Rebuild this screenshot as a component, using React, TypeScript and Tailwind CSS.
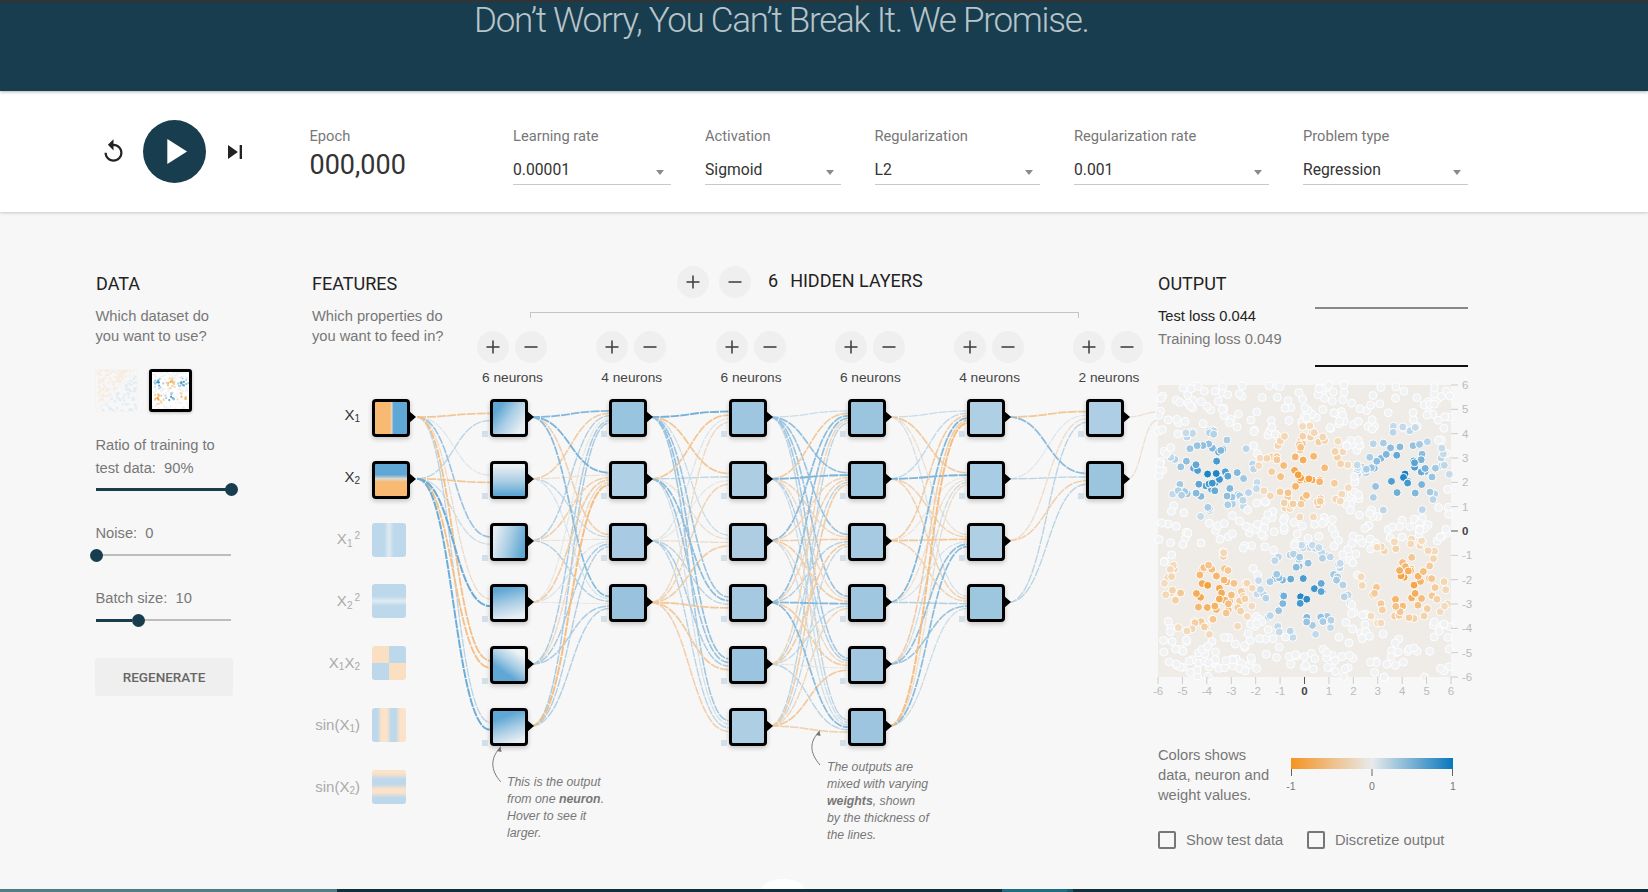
import { MdPlayArrow, MdReplay, MdSkipNext } from "react-icons/md";

// deterministic random so the scatter stays the same between renders
function seeded(seed: number) {
  return () => {
    seed = (seed + 0x6d2b79f5) | 0;
    let t = Math.imul(seed ^ (seed >>> 15), 1 | seed);
    t = (t + Math.imul(t ^ (t >>> 7), 61 | t)) ^ t;
    return ((t ^ (t >>> 14)) >>> 0) / 4294967296;
  };
}

function mix(a: number[], b: number[], t: number) {
  const c = a.map((v, i) => Math.round(v + (b[i] - v) * t));
  return `rgb(${c[0]},${c[1]},${c[2]})`;
}

const clusters = [
  { x: -3.8, y: 2.4, s: 1 },
  { x: 0, y: 2.4, s: -1 },
  { x: 4, y: 2.4, s: 1 },
  { x: -3.9, y: -2.5, s: -1 },
  { x: 0, y: -2.5, s: 1 },
  { x: 4.1, y: -2.2, s: -1 },
];

type Dot = { x: number; y: number; fill: string };

function makeDots(count: number, seed: number): Dot[] {
  const rnd = seeded(seed);
  const dots: Dot[] = [];
  for (let i = 0; i < count; i++) {
    const x = rnd() * 12 - 6;
    const y = rnd() * 12 - 6;
    let fill = "rgb(240,242,244)";
    for (const c of clusters) {
      const d = Math.hypot(x - c.x, y - c.y);
      if (d < 1.95) {
        const t = 0.08 + 0.92 * Math.pow(1 - d / 1.95, 1.4);
        fill =
          c.s > 0
            ? mix([214, 228, 238], [8, 119, 189], t)
            : mix([243, 226, 205], [245, 147, 34], t);
      }
    }
    dots.push({ x, y, fill });
  }
  return dots;
}

const dots = makeDots(820, 42);
const thumbDots = makeDots(170, 7);

const colX = [490, 609.3, 728.6, 847.9, 967.2, 1086.5];
const rowY = (i: number) => 399 + 61.8 * i;

// weights between layers, [source][target], negative is orange
const weights: number[][][] = [
  [
    [-0.6, 0.08, 0.5, -0.25, -0.7, 0.3],
    [0.3, -0.6, 0.2, 0.85, -0.7, 0.8],
  ],
  [
    [0.65, 0.7, -0.45, 0.6],
    [-0.5, -0.2, 0.25, 0.12],
    [0.35, -0.45, -0.15, 0.35],
    [-0.1, -0.5, 0.1, -0.06],
    [0.4, -0.3, 0.4, 0.4],
    [0.4, -0.8, 0.35, 0.35],
  ],
  [
    [0.75, -0.6, 0.2, 0.5, 0.55, 0.45],
    [-0.6, 0.3, -0.2, 0.6, 0.5, 0.15],
    [0.1, -0.1, -0.25, 0.3, 0.4, 0.3],
    [-0.3, -0.4, -0.5, -0.6, -0.55, -0.45],
  ],
  [
    [0.2, 0.55, 0.5, 0.5, 0.45, 0.3],
    [-0.55, 0.7, -0.4, -0.3, 0.35, 0.2],
    [0.6, -0.4, -0.5, -0.5, -0.3, 0.2],
    [0.55, -0.4, 0.35, 0.65, -0.5, 0.6],
    [-0.35, 0.3, -0.5, 0.25, -0.1, 0.3],
    [0.3, -0.5, 0.25, -0.35, -0.55, -0.45],
  ],
  [
    [0.2, -0.55, -0.2, 0.15],
    [0.25, 0.7, -0.4, -0.4],
    [-0.5, -0.1, -0.6, -0.4],
    [0.65, -0.2, 0.12, 0.35],
    [-0.5, 0.2, 0.55, 0.5],
    [-0.8, -0.25, 0.6, 0.2],
  ],
  [
    [-0.6, 0.6],
    [0.08, 0.3],
    [-0.25, -0.45],
    [0.3, 0.3],
  ],
];

function Links() {
  const paths: { d: string; w: number }[] = [];
  weights.forEach((layer, k) => {
    const sx = k === 0 ? 417 : colX[k - 1] + 41;
    const tx = colX[k];
    layer.forEach((row, i) => {
      const sy = rowY(i) + 18;
      row.forEach((w, j) => {
        const ty = rowY(j) + 18 + (i - (layer.length - 1) / 2) * (14.5 / layer.length);
        const mx = (sx + tx) / 2;
        paths.push({ d: `M${sx},${sy} C${mx},${sy} ${mx},${ty} ${tx},${ty}`, w });
      });
    });
  });
  // the last layer runs faintly into the output
  paths.push({ d: "M1127,417 C1142,417 1142,413 1158,412", w: -0.18 });
  paths.push({ d: "M1127,479 C1142,479 1142,420 1158,420", w: -0.18 });
  const sorted = paths.slice().sort((a, b) => Math.abs(a.w) - Math.abs(b.w));
  return (
    <svg
      width={846}
      height={620}
      viewBox="312 266 846 620"
      className="absolute top-0 left-0 z-0 overflow-visible"
      fill="none"
    >
      {sorted.map((p, i) => (
        <path
          key={i}
          d={p.d}
          strokeWidth={1 + 1.2 * Math.abs(p.w)}
          strokeDasharray="9 1"
          stroke={
            p.w > 0
              ? mix([232, 234, 235], [108, 172, 215], Math.min(1, Math.abs(p.w) * 1.25))
              : mix([232, 234, 235], [245, 190, 130], Math.min(1, Math.abs(p.w) * 1.35))
          }
        />
      ))}
      <path d="M500.7,781.7 C490,770 491,758 499,749" stroke="#777" strokeWidth="1" />
      <path d="M497,751 L500.5,746 L501.5,752 Z" fill="#777" />
      <path d="M820,765 C809,752 810,742 818,733" stroke="#777" strokeWidth="1" />
      <path d="M816,735 L819.5,730 L820.5,736 Z" fill="#777" />
    </svg>
  );
}

function Slider({ fill, thumb }: { fill: string; thumb: string }) {
  return (
    <div className="relative h-[14px] w-[135px] ml-[1px]">
      <div className="absolute left-0 right-0 top-[6px] h-[2px] bg-[#bdbdbd]" />
      <div className={`absolute left-0 top-[5.5px] h-[3px] bg-[#183d4e] ${fill}`} />
      <div className={`absolute top-[0.5px] h-[13px] w-[13px] rounded-full bg-[#183d4e] ${thumb}`} />
    </div>
  );
}

function Select({ label, value, width }: { label: string; value: string; width: string }) {
  return (
    <div className={`flex flex-col ${width}`}>
      <div className="text-[14.7px] leading-[20px] text-[#777] [font-family:Roboto,sans-serif]">{label}</div>
      <div className="mt-[10px] flex h-[29px] items-center justify-between border-b border-[#c9c9c9] pr-[7px]">
        <span className="text-[15.7px] text-[#333] [font-family:Roboto,sans-serif]">{value}</span>
        <span className="mt-[4px] h-0 w-0 border-x-[4px] border-t-[5px] border-x-transparent border-t-[#8a8a8a]" />
      </div>
    </div>
  );
}

function RoundButton({ sign }: { sign: string }) {
  return (
    <button className="flex h-[32px] w-[32px] items-center justify-center rounded-full bg-[#efefef]">
      <svg width="16" height="16" viewBox="0 0 16 16" stroke="#444" strokeWidth="1.6">
        <path d="M1.5 8 H14.5" />
        {sign === "+" && <path d="M8 1.5 V14.5" />}
      </svg>
    </button>
  );
}

function Node({ bg }: { bg: string }) {
  return (
    <div className="relative h-[38px] w-[38px]">
      <div className="absolute left-[-8px] top-[32px] h-[6px] w-[6px] bg-[#d2dfe9]" />
      <div className={`h-[38px] w-[38px] rounded-[4px] border-[3px] border-black shadow-[0_2px_5px_rgba(0,0,0,0.22)] ${bg}`} />
      <div className="absolute left-[37px] top-[12px] h-0 w-0 border-y-[6px] border-l-[7px] border-y-transparent border-l-black" />
    </div>
  );
}

const hidden = [
  {
    label: "6 neurons",
    nodes: [
      "bg-[linear-gradient(125deg,#5fa7d5_18%,#a8cde5_48%,#e6eef3_85%)]",
      "bg-[linear-gradient(180deg,#eaeff3_5%,#a9cde4_55%,#5fa7d5_95%)]",
      "bg-[linear-gradient(105deg,#e4ecf2_10%,#a9cde4_50%,#5fa7d5_90%)]",
      "bg-[linear-gradient(165deg,#5fa7d5_12%,#a9cde4_50%,#e8eff3_90%)]",
      "bg-[linear-gradient(35deg,#5fa7d5_30%,#a9cde4_55%,#eef3f6_85%)]",
      "bg-[linear-gradient(160deg,#5fa7d5_22%,#a9cde4_55%,#e8eff3_90%)]",
    ],
  },
  { label: "4 neurons", nodes: ["bg-[#98c4df]", "bg-[#b0d0e6]", "bg-[#a8cae2]", "bg-[#98c2de]"] },
  {
    label: "6 neurons",
    nodes: ["bg-[#9ec6e0]", "bg-[#adcde3]", "bg-[#aecde3]", "bg-[#a4c9e1]", "bg-[#9ac4df]", "bg-[#aecee4]"],
  },
  {
    label: "6 neurons",
    nodes: ["bg-[#9bc5df]", "bg-[#9cc6e0]", "bg-[#a6cae2]", "bg-[#9fc7e0]", "bg-[#a3c8e1]", "bg-[#9dc5df]"],
  },
  { label: "4 neurons", nodes: ["bg-[#aecfe4]", "bg-[#a8cce3]", "bg-[#aecfe4]", "bg-[#9dc6df]"] },
  { label: "2 neurons", nodes: ["bg-[#adcee4]", "bg-[#9bc5df]"] },
];

const features = [
  {
    label: (
      <>
        X<sub className="text-[10px]">1</sub>
      </>
    ),
    bg: "bg-[linear-gradient(90deg,#f8b973_47%,#e6d6c2_52%,#5fa7d5_58%)]",
    active: true,
  },
  {
    label: (
      <>
        X<sub className="text-[10px]">2</sub>
      </>
    ),
    bg: "bg-[linear-gradient(180deg,#5fa7d5_34%,#dfd9ce_46%,#f8b973_56%)]",
    active: true,
  },
  {
    label: (
      <>
        X<sub className="text-[10px]">1</sub>
        <sup className="ml-[2px] text-[10px]">2</sup>
      </>
    ),
    bg: "bg-[linear-gradient(90deg,#bdd8eb_36%,#e0ebf2_50%,#bdd8eb_64%)]",
  },
  {
    label: (
      <>
        X<sub className="text-[10px]">2</sub>
        <sup className="ml-[2px] text-[10px]">2</sup>
      </>
    ),
    bg: "bg-[linear-gradient(180deg,#bdd8eb_36%,#e0ebf2_50%,#bdd8eb_64%)]",
  },
  {
    label: (
      <>
        X<sub className="text-[10px]">1</sub>X<sub className="text-[10px]">2</sub>
      </>
    ),
    bg: "bg-[conic-gradient(#bdd8eb_0_25%,#fbdfc3_25%_50%,#bdd8eb_50%_75%,#fbdfc3_75%)]",
  },
  {
    label: (
      <>
        sin(X<sub className="text-[10px]">1</sub>)
      </>
    ),
    bg: "bg-[linear-gradient(90deg,#bdd8eb_16%,#fbe2c8_28%_44%,#bdd8eb_56%_70%,#fbe2c8_82%)]",
  },
  {
    label: (
      <>
        sin(X<sub className="text-[10px]">2</sub>)
      </>
    ),
    bg: "bg-[linear-gradient(180deg,#fbe2c8_10%,#bdd8eb_28%_42%,#fbe2c8_56%_66%,#bdd8eb_82%)]",
  },
];

function Thumb({ selected }: { selected?: boolean }) {
  return (
    <div
      className={
        selected
          ? "h-[43px] w-[43px] rounded-[3px] border-[3px] border-black bg-white shadow-[0_1px_3px_rgba(0,0,0,0.25)] overflow-hidden"
          : "h-[43px] w-[43px] rounded-[3px] border-[1px] border-[#eeeeee] opacity-35 overflow-hidden"
      }
    >
      <svg width="100%" height="100%" viewBox="-6 -6 12 12">
        {thumbDots.map((d, i) =>
          selected ? (
            <circle key={i} cx={d.x} cy={-d.y} r="0.36" fill={d.fill} />
          ) : (
            <circle
              key={i}
              cx={d.x}
              cy={-d.y}
              r="0.36"
              fill={d.x - d.y > 1 ? "#bcd9ec" : d.x - d.y < -1 ? "#fad9b6" : "#ececec"}
            />
          ),
        )}
      </svg>
    </div>
  );
}

function Heatmap() {
  const ticks = [6, 5, 4, 3, 2, 1, 0, -1, -2, -3, -4, -5, -6];
  const sx = (v: number) => 1158 + (v + 6) * (293 / 12);
  const sy = (v: number) => 385 + (6 - v) * (292 / 12);
  return (
    <svg width={330} height={320} viewBox="1158 385 330 320" className="overflow-visible">
      <rect x={1158} y={385} width={293} height={292} fill="#efece8" />
      {dots.map((d, i) => (
        <circle key={i} cx={sx(d.x)} cy={sy(d.y)} r={4} fill={d.fill} stroke="#fff" strokeWidth={1} />
      ))}
      {ticks.map((t) => (
        <g key={t}>
          <path d={`M1451 ${sy(t)} H1458`} stroke={t === 0 ? "#555" : "#ccc"} />
          <text
            x={1462}
            y={sy(t) + 4}
            fontSize={11.5}
            fill={t === 0 ? "#444" : "#bbb"}
            fontFamily="Liberation Sans, Arial, sans-serif"
            fontWeight={t === 0 ? 700 : 400}
          >
            {t}
          </text>
          <path d={`M${sx(t)} 677 V684`} stroke={t === 0 ? "#555" : "#ccc"} />
          <text
            x={sx(t)}
            y={695}
            fontSize={11.5}
            textAnchor="middle"
            fill={t === 0 ? "#444" : "#bbb"}
            fontFamily="Liberation Sans, Arial, sans-serif"
            fontWeight={t === 0 ? 700 : 400}
          >
            {t}
          </text>
        </g>
      ))}
    </svg>
  );
}

function Legend() {
  return (
    <svg width={170} height={44} viewBox="0 0 170 44" className="mt-[13px] overflow-visible">
      <defs>
        <linearGradient id="legend">
          <stop offset="0" stopColor="#f59322" />
          <stop offset="0.5" stopColor="#e8eaeb" />
          <stop offset="1" stopColor="#0877bd" />
        </linearGradient>
      </defs>
      <rect x={0} y={0} width={162} height={11} fill="url(#legend)" />
      <path d="M0.5 11 V18 M81 11 V18 M161.5 11 V18" stroke="#666" />
      {[
        ["-1", 0],
        ["0", 81],
        ["1", 162],
      ].map(([t, x]) => (
        <text
          key={t}
          x={x}
          y={32}
          fontSize={10.5}
          textAnchor="middle"
          fill="#777"
          fontFamily="Liberation Sans, Arial, sans-serif"
        >
          {t}
        </text>
      ))}
    </svg>
  );
}

export default function App() {
  return (
    <div className="relative flex h-[892px] w-[1648px] flex-col overflow-hidden bg-[#f7f7f7] [font-family:'Liberation_Sans',Arial,sans-serif]">
      {/* Header */}
      <header className="relative z-20 h-[91px] border-t-2 border-[#333] bg-[#183d4e] pl-[474px] shadow-[0_1px_3px_rgba(0,0,0,0.3)]">
        <h1 className="pt-[1px] text-[35px] leading-[36px] font-light tracking-[-1.25px] text-[#b7c4ca] [font-family:Roboto,sans-serif]">
          Don’t Worry, You Can’t Break It. We Promise.
        </h1>
      </header>

      {/* Controls */}
      <div className="relative z-10 flex h-[121px] items-center bg-white pl-[99.5px] shadow-[0_1px_3px_rgba(0,0,0,0.2)]">
        <MdReplay size={27} color="#222" />
        <div className="ml-[16.5px] flex h-[63px] w-[63px] items-center justify-center rounded-full bg-[#183d4e]">
          <MdPlayArrow size={43} color="#fff" />
        </div>
        <MdSkipNext size={28} color="#222" className="ml-[14.5px]" />
        <div className="ml-[61px] flex w-[203.5px] flex-col self-start pt-[35px]">
          <div className="text-[14.7px] leading-[20px] text-[#777] [font-family:Roboto,sans-serif]">Epoch</div>
          <div className="mt-[1px] text-[27px] leading-[36px] text-[#333] [font-family:Roboto,sans-serif]">000,000</div>
        </div>
        <div className="flex gap-[34px] self-start pt-[35px]">
          <Select label="Learning rate" value="0.00001" width="w-[158px]" />
          <Select label="Activation" value="Sigmoid" width="w-[135.5px]" />
          <Select label="Regularization" value="L2" width="w-[165.5px]" />
          <Select label="Regularization rate" value="0.001" width="w-[195px]" />
          <Select label="Problem type" value="Regression" width="w-[165px]" />
        </div>
      </div>

      {/* Main */}
      <main className="flex flex-1 pt-[54px] pl-[95px]">
        {/* Data */}
        <section className="flex w-[217px] shrink-0 flex-col">
          <h2 className="mb-[6px] flex h-[34px] items-center pl-[1px] text-[18px] text-[#222] [font-family:Roboto,sans-serif]">DATA</h2>
          <p className="pl-[0.5px] text-[14.7px] leading-[20px] text-[#777]">
            Which dataset do
            <br />
            you want to use?
          </p>
          <div className="mt-[23px] flex gap-[11px]">
            <Thumb />
            <Thumb selected />
          </div>
          <p className="mt-[22px] pl-[0.5px] text-[14.7px] leading-[23px] text-[#777]">
            Ratio of training to
            <br />
            test data:&nbsp; 90%
          </p>
          <div className="mt-[2px]">
            <Slider fill="w-[135px]" thumb="left-[128.5px]" />
          </div>
          <p className="mt-[27px] pl-[0.5px] text-[14.7px] leading-[20px] text-[#777]">Noise:&nbsp; 0</p>
          <div className="mt-[5px]">
            <Slider fill="w-0" thumb="left-[-6px]" />
          </div>
          <p className="mt-[26px] pl-[0.5px] text-[14.7px] leading-[20px] text-[#777]">Batch size:&nbsp; 10</p>
          <div className="mt-[5px]">
            <Slider fill="w-[36px]" thumb="left-[35.5px]" />
          </div>
          <button className="mt-[31px] h-[38px] w-[138px] rounded-[3px] bg-[#efefef] text-[13.5px] font-medium text-[#666] [font-family:Roboto,sans-serif]">
            REGENERATE
          </button>
        </section>

        {/* Features and network */}
        <section className="relative flex w-[846px] shrink-0">
          <Links />
          <div className="relative z-10 flex w-[165px] shrink-0 flex-col">
            <h2 className="mb-[6px] flex h-[34px] items-center text-[18px] text-[#222] [font-family:Roboto,sans-serif]">FEATURES</h2>
            <p className="text-[14.7px] leading-[20px] text-[#777]">
              Which properties do
              <br />
              you want to feed in?
            </p>
            <div className="mt-[53px] flex flex-col">
              {features.map((f, i) => (
                <div key={i} className="flex h-[61.8px] items-start">
                  <div
                    className={
                      f.active
                        ? "flex h-[32px] w-[48px] items-center justify-end text-[15px] whitespace-nowrap text-[#333]"
                        : "flex h-[34px] w-[48px] items-center justify-end text-[15px] whitespace-nowrap text-[#aaa]"
                    }
                  >
                    <span>{f.label}</span>
                  </div>
                  <div
                    className={
                      f.active
                        ? `relative ml-[12px] h-[38px] w-[38px] rounded-[4px] border-[3px] border-black shadow-[0_2px_5px_rgba(0,0,0,0.22)] ${f.bg}`
                        : `ml-[12px] h-[34px] w-[34px] rounded-[3px] ${f.bg}`
                    }
                  >
                    {f.active && (
                      <div className="absolute left-[34px] top-[9px] h-0 w-0 border-y-[6px] border-l-[7px] border-y-transparent border-l-black" />
                    )}
                  </div>
                </div>
              ))}
            </div>
          </div>

          <div className="relative z-10 flex w-[681px] flex-col">
            <div className="flex h-[32px] items-center gap-[10px] pl-[200px]">
              <RoundButton sign="+" />
              <RoundButton sign="-" />
              <span className="ml-[7px] pb-[3px] text-[18px] text-[#222] [font-family:Roboto,sans-serif]">6</span>
              <span className="ml-[2px] pb-[3px] text-[18px] text-[#222] [font-family:Roboto,sans-serif]">HIDDEN LAYERS</span>
            </div>
            <div className="mt-[14px] ml-[53px] h-[6px] w-[549px] border-x border-t border-[#c4c4c4]" />
            <div className="mt-[13px] flex">
              {hidden.map((layer, k) => (
                <div key={k} className="flex w-[119.3px] shrink-0 flex-col">
                  <div className="flex gap-[6px]">
                    <RoundButton sign="+" />
                    <RoundButton sign="-" />
                  </div>
                  <div className="mt-[5px] h-[20px] pl-[5px] text-[13.7px] leading-[20px] text-[#444]">{layer.label}</div>
                  <div className="mt-[11px] flex flex-col pl-[13px]">
                    {layer.nodes.map((bg, i) => (
                      <div key={i} className="h-[61.8px]">
                        <Node bg={bg} />
                      </div>
                    ))}
                  </div>
                </div>
              ))}
            </div>
          </div>

          {/* Callouts */}
          <p className="absolute top-[508px] left-[195px] z-10 w-[110px] text-[12.3px] leading-[17px] text-[#777] italic">
            This is the output
            <br />
            from one <b>neuron</b>.
            <br />
            Hover to see it
            <br />
            larger.
          </p>
          <p className="absolute top-[493px] left-[515px] z-10 w-[120px] text-[12.3px] leading-[17px] text-[#777] italic">
            The outputs are
            <br />
            mixed with varying
            <br />
            <b>weights</b>, shown
            <br />
            by the thickness of
            <br />
            the lines.
          </p>
        </section>

        {/* Output */}
        <section className="flex w-[330px] shrink-0 flex-col">
          <h2 className="mb-[2px] flex h-[34px] items-center text-[18px] text-[#222] [font-family:Roboto,sans-serif]">OUTPUT</h2>
          <div className="flex h-[83px]">
            <div className="w-[157px] pt-[3px] text-[14.7px] leading-[23px]">
              <div className="text-[#222]">Test loss 0.044</div>
              <div className="text-[#777]">Training loss 0.049</div>
            </div>
            <div className="mt-[5px] h-[60px] w-[153px] border-t-2 border-b-2 border-t-[#888] border-b-[#111]" />
          </div>
          <Heatmap />
          <div className="mt-[40px] flex">
            <p className="w-[133px] text-[14.7px] leading-[20px] text-[#777]">
              Colors shows
              <br />
              data, neuron and
              <br />
              weight values.
            </p>
            <Legend />
          </div>
          <div className="mt-[24px] flex items-center text-[14.7px] text-[#777]">
            <div className="flex w-[149px] items-center gap-[10px]">
              <span className="h-[18px] w-[18px] rounded-[2px] border-2 border-[#777]" />
              Show test data
            </div>
            <div className="flex items-center gap-[10px]">
              <span className="h-[18px] w-[18px] rounded-[2px] border-2 border-[#777]" />
              Discretize output
            </div>
          </div>
        </section>
      </main>

      {/* Bottom edge */}
      <div className="absolute bottom-[3px] left-[762px] h-[10px] w-[42px] rounded-t-[21px_10px] bg-white" />
      <footer className="flex h-[3px] shrink-0 bg-[#0f303c]">
        <div className="w-[337px] bg-[#4f7d84]" />
        <div className="ml-[665px] w-[65px] bg-[#1d6e82]" />
        <div className="w-[6px] bg-[#1a5a6e]" />
      </footer>
    </div>
  );
}
